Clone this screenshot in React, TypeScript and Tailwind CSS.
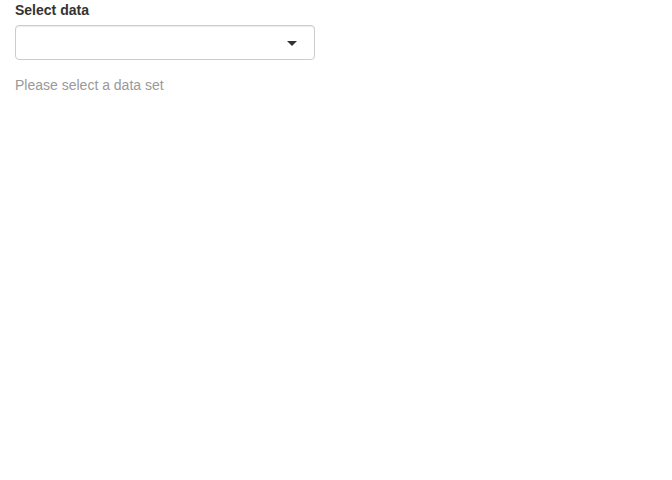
import React from 'react';

export default function App() {
  return (
    <div className="min-h-[480px] w-[672px] bg-white px-[15px] font-['Liberation_Sans',Arial,sans-serif] text-[14px] leading-5 text-[#333]">
      <div className="mb-[15px] w-[300px]">
        <label className="mb-[5px] block font-bold">Select data</label>
        <div className="relative h-[35px] w-[300px] rounded-[4px] border border-[#cccccc] bg-white shadow-[inset_0_1px_1px_rgba(0,0,0,0.075)]">
          <span className="absolute right-[17px] top-[15px] h-0 w-0 border-x-[5px] border-t-[5px] border-x-transparent border-t-[#333]" />
        </div>
      </div>
      <p className="text-[#999]">Please select a data set</p>
    </div>
  );
}
